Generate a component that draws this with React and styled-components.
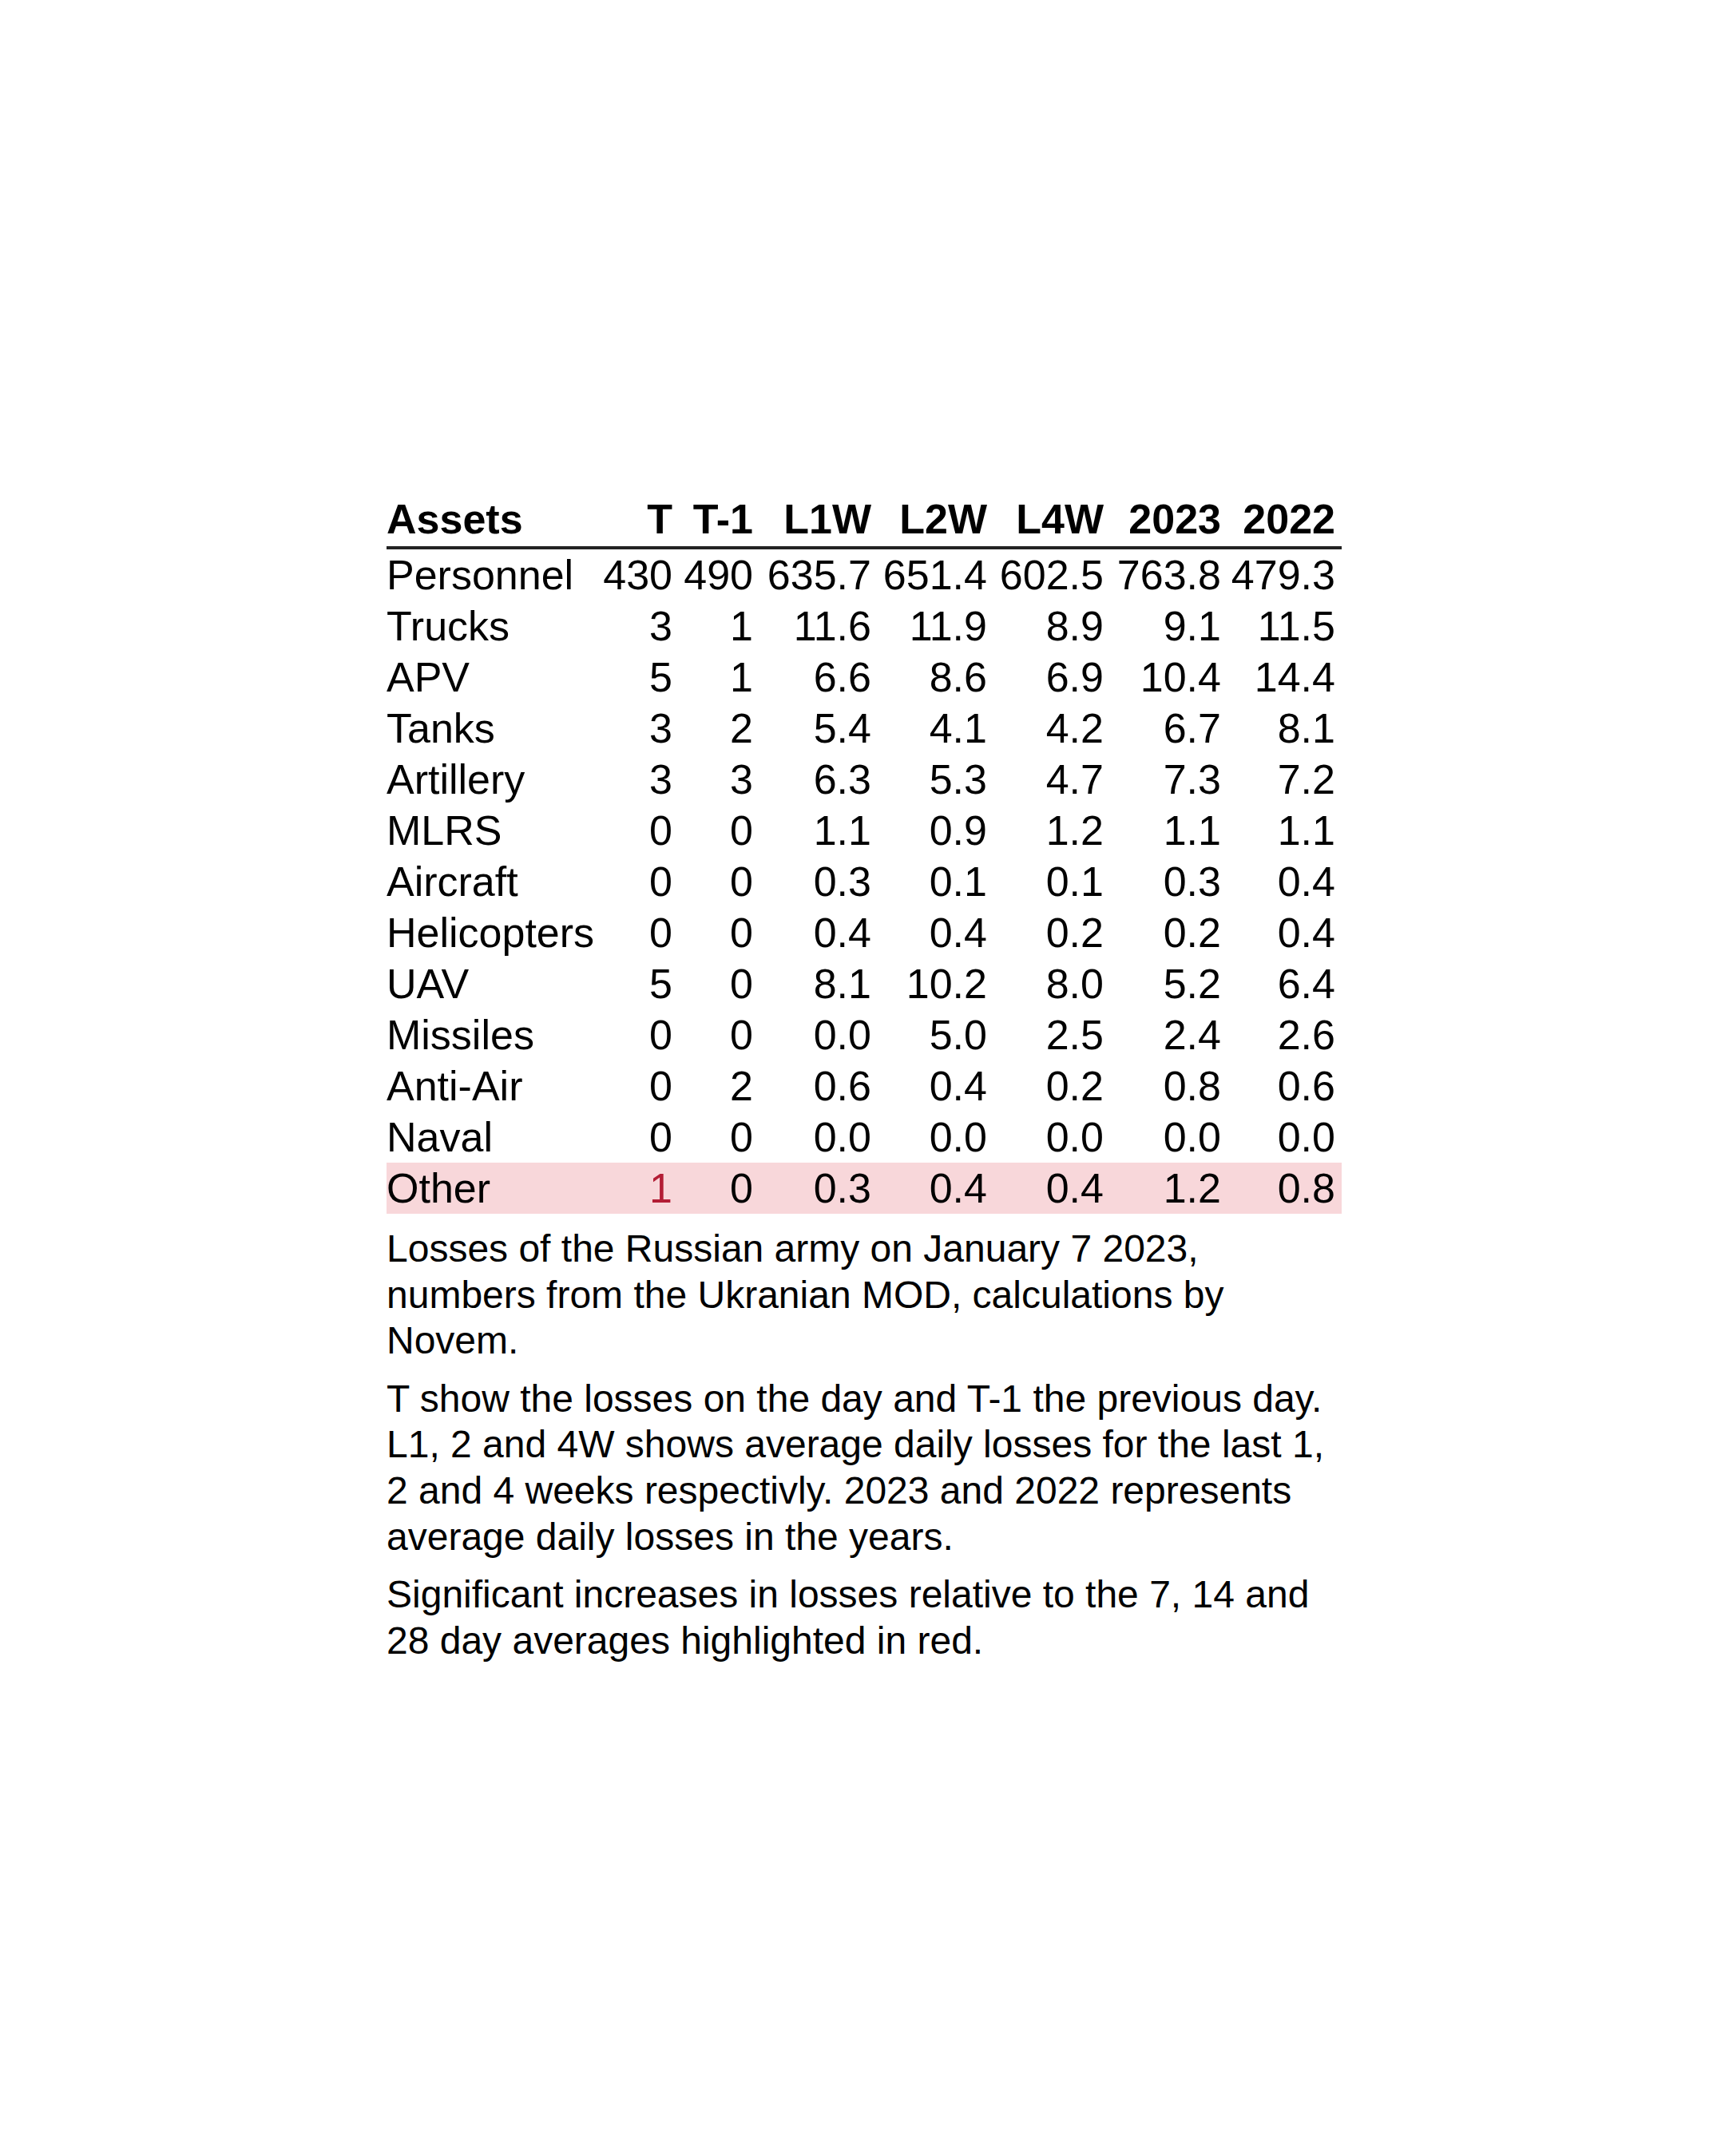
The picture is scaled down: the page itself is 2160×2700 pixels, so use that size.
import React from "react";
import styled, { createGlobalStyle } from "styled-components";

const GlobalStyle = createGlobalStyle`
  html, body {
    margin: 0;
    padding: 0;
    background: #ffffff;
  }
  body {
    font-family: "Liberation Sans", Arial, sans-serif;
    color: #000;
  }
  *, *::before, *::after {
    box-sizing: border-box;
  }
`;

const Page = styled.div`
  width: 1196px;
  margin: 0 0 0 484px;
  padding-top: 618px;
  padding-bottom: 200px;
`;

const Table = styled.table`
  width: 1196px;
  border-collapse: collapse;
  table-layout: fixed;
  font-size: 52px;
  line-height: 64px;
`;

const HeadCell = styled.th`
  width: ${(p) => p.$w}px;
  padding: 0 ${(p) => (p.$left ? 0 : 8)}px 2px 0;
  text-align: ${(p) => (p.$left ? "left" : "right")};
  font-weight: 700;
  border-bottom: 4px solid #222;
  white-space: nowrap;
`;

const Row = styled.tr`
  background: ${(p) => (p.$hot ? "#f8d7da" : "transparent")};
`;

const Cell = styled.td`
  padding: 0 ${(p) => (p.$left ? 0 : 8)}px 0 0;
  text-align: ${(p) => (p.$left ? "left" : "right")};
  color: ${(p) => (p.$red ? "#b31d35" : "#000")};
  white-space: nowrap;
`;

const Note = styled.p`
  margin: 15px 0 0;
  font-size: 48px;
  line-height: 57.6px;
`;

const columns = [
  { label: "Assets", w: 268, left: true },
  { label: "T", w: 98 },
  { label: "T-1", w: 101 },
  { label: "L1W", w: 148 },
  { label: "L2W", w: 145 },
  { label: "L4W", w: 146 },
  { label: "2023", w: 147 },
  { label: "2022", w: 143 },
];

const rows = [
  ["Personnel", "430", "490", "635.7", "651.4", "602.5", "763.8", "479.3"],
  ["Trucks", "3", "1", "11.6", "11.9", "8.9", "9.1", "11.5"],
  ["APV", "5", "1", "6.6", "8.6", "6.9", "10.4", "14.4"],
  ["Tanks", "3", "2", "5.4", "4.1", "4.2", "6.7", "8.1"],
  ["Artillery", "3", "3", "6.3", "5.3", "4.7", "7.3", "7.2"],
  ["MLRS", "0", "0", "1.1", "0.9", "1.2", "1.1", "1.1"],
  ["Aircraft", "0", "0", "0.3", "0.1", "0.1", "0.3", "0.4"],
  ["Helicopters", "0", "0", "0.4", "0.4", "0.2", "0.2", "0.4"],
  ["UAV", "5", "0", "8.1", "10.2", "8.0", "5.2", "6.4"],
  ["Missiles", "0", "0", "0.0", "5.0", "2.5", "2.4", "2.6"],
  ["Anti-Air", "0", "2", "0.6", "0.4", "0.2", "0.8", "0.6"],
  ["Naval", "0", "0", "0.0", "0.0", "0.0", "0.0", "0.0"],
  ["Other", "1", "0", "0.3", "0.4", "0.4", "1.2", "0.8"],
];

// rows flagged as significant, with the column index of the red value
const hot = { Other: [1] };

export default function App() {
  return (
    <>
      <GlobalStyle />
      <Page>
        <Table>
          <thead>
            <tr>
              {columns.map((c) => (
                <HeadCell key={c.label} $w={c.w} $left={c.left}>
                  {c.label}
                </HeadCell>
              ))}
            </tr>
          </thead>
          <tbody>
            {rows.map((r) => (
              <Row key={r[0]} $hot={!!hot[r[0]]}>
                {r.map((v, i) => (
                  <Cell
                    key={i}
                    $left={i === 0}
                    $red={hot[r[0]] && hot[r[0]].includes(i)}
                  >
                    {v}
                  </Cell>
                ))}
              </Row>
            ))}
          </tbody>
        </Table>
        <Note>
          Losses of the Russian army on January 7 2023, numbers from the
          Ukranian MOD, calculations by Novem.
        </Note>
        <Note>
          T show the losses on the day and T-1 the previous day. L1, 2 and 4W
          shows average daily losses for the last 1, 2 and 4 weeks
          respectivly. 2023 and 2022 represents average daily losses in the
          years.
        </Note>
        <Note>
          Significant increases in losses relative to the 7, 14 and 28 day
          averages highlighted in red.
        </Note>
      </Page>
    </>
  );
}
